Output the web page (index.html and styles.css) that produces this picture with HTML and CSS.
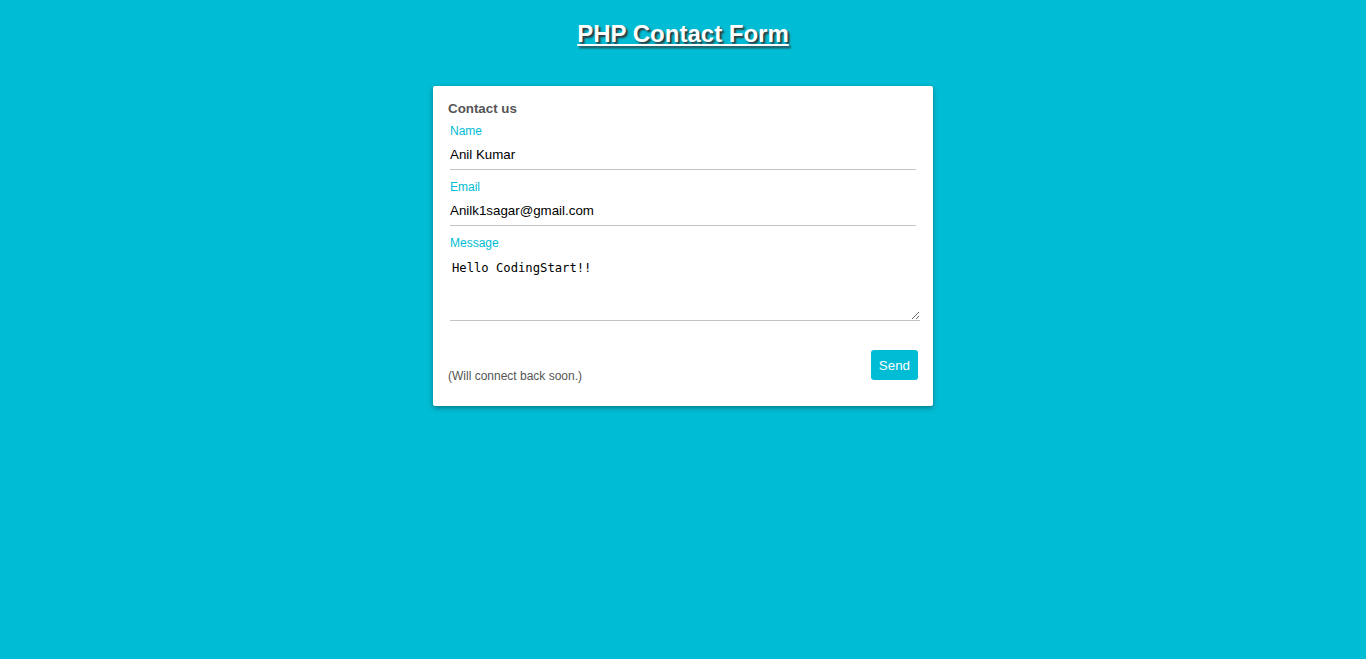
FILE: index.html
```html
<!DOCTYPE html>
<html>
<head>
<meta charset="utf-8">
<title>PHP Contact Form</title>
<link rel="stylesheet" href="styles.css">
</head>
<body>
<h1 class="title">PHP Contact Form</h1>
<form class="card">
  <div class="card-title">Contact us</div>
  <div class="field">
    <label class="label">Name</label>
    <input class="input" type="text" value="Anil Kumar">
  </div>
  <div class="field">
    <label class="label">Email</label>
    <input class="input" type="text" value="Anilk1sagar@gmail.com">
  </div>
  <div class="field field-msg">
    <label class="label">Message</label>
    <textarea class="textarea">Hello CodingStart!!</textarea>
  </div>
  <div class="footer">
    <span class="note">(Will connect back soon.)</span>
    <button class="send" type="button">Send</button>
  </div>
</form>
</body>
</html>
```
FILE: styles.css
```css
html, body {
  margin: 0;
  padding: 0;
  background: #00bcd4;
  font-family: "Liberation Sans", Arial, sans-serif;
}
body {
  min-height: 659px;
  padding-top: 20px;
  box-sizing: border-box;
}
.title {
  margin: 0;
  text-align: center;
  color: #fff;
  font-size: 24px;
  line-height: 28px;
  font-weight: bold;
  text-decoration: underline;
  text-shadow: 2px 2px 2px #333;
}
.card {
  display: block;
  width: 470px;
  margin: 38px auto 0;
  padding: 15px 15px 14px;
  background: #fff;
  border-radius: 2px;
  box-shadow: 0 2px 5px rgba(0, 0, 0, 0.35);
}
.card-title {
  font-size: 13.33px;
  line-height: 16px;
  font-weight: bold;
  color: #555;
  margin-bottom: 7px;
}
.field {
  padding-left: 2px;
  margin-bottom: 10px;
}
.label {
  display: block;
  font-size: 12px;
  line-height: 14px;
  color: #00bcd4;
}
.input {
  display: block;
  box-sizing: border-box;
  width: 466px;
  height: 32px;
  margin: 0;
  padding: 2px 0 0;
  border: none;
  border-bottom: 1px solid #c4c4c4;
  outline: none;
  font-family: "Liberation Sans", Arial, sans-serif;
  font-size: 13.33px;
  color: #000;
  background: transparent;
}
.field-msg {
  margin-bottom: 0;
}
.textarea {
  display: block;
  box-sizing: border-box;
  width: 470px;
  height: 63px;
  margin: 8px 0 0;
  padding: 3px 2px;
  border: none;
  border-bottom: 1px solid #c4c4c4;
  outline: none;
  font-family: "DejaVu Sans Mono", "Liberation Mono", monospace;
  font-size: 12.2px;
  line-height: 14px;
  color: #000;
  background: transparent;
}
.footer {
  display: flex;
  justify-content: space-between;
  align-items: flex-start;
  margin-top: 29px;
  margin-bottom: 9px;
}
.note {
  margin-top: 19px;
  font-size: 12px;
  line-height: 14px;
  color: #555;
}
.send {
  height: 30px;
  padding: 0 8px;
  border: none;
  border-radius: 3px;
  background: #00bcd4;
  color: #fff;
  font-family: "Liberation Sans", Arial, sans-serif;
  font-size: 13.33px;
  font-weight: normal;
  cursor: pointer;
}
```
